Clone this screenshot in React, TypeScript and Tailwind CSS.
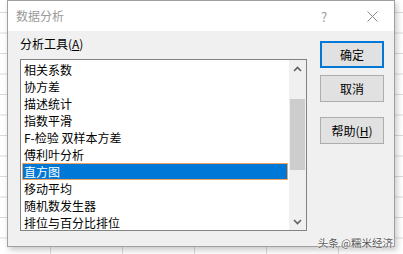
import React from "react";

const items = [
  "相关系数",
  "协方差",
  "描述统计",
  "指数平滑",
  "F-检验 双样本方差",
  "傅利叶分析",
  "直方图",
  "移动平均",
  "随机数发生器",
  "排位与百分比排位",
];

function Chevron({ up }: { up?: boolean }) {
  return (
    <svg width="9" height="6" viewBox="0 0 9 6">
      <path
        d={up ? "M1 5 L4.5 1.5 L8 5" : "M1 1 L4.5 4.5 L8 1"}
        fill="none"
        stroke="#606060"
        strokeWidth="1.6"
      />
    </svg>
  );
}

export default function App() {
  return (
    <div
      className="relative w-[403px] h-[254px] overflow-hidden bg-white bg-[linear-gradient(#dadada_1px,transparent_1px),linear-gradient(90deg,#dadada_1px,transparent_1px)] bg-size-[72px_20.5px] bg-position-[50px_12px]"
      style={{ fontFamily: '"Noto Sans CJK SC", "Noto Sans", sans-serif' }}
    >
      <div className="ml-[7px] w-[388px] h-[247px] flex flex-col border border-[#a0a0a0] bg-[#f0f0f0] shadow-[2px_3px_6px_rgba(0,0,0,0.22)]">
        {/* title bar */}
        <div className="h-[30px] bg-white flex items-center pl-[8px] shrink-0">
          <span className="text-[12px] text-[#9a9a9a] leading-none">数据分析</span>
          <span className="ml-auto text-[13px] text-[#9a9a9a] leading-none w-[10px] mr-[36px]">?</span>
          <svg width="11" height="11" viewBox="0 0 11 11" className="mr-[16px]">
            <path d="M0.5 0.5 L10.5 10.5 M10.5 0.5 L0.5 10.5" stroke="#8a8a8a" strokeWidth="1" />
          </svg>
        </div>
        {/* body */}
        <div className="flex flex-1">
          <div className="pl-[12px] pt-[4px]">
            <div className="text-[12px] leading-[17px] text-black">
              分析工具(<span className="underline">A</span>)
            </div>
            <div className="mt-[7px] w-[287px] h-[172px] border border-[#828282] bg-white flex">
              <div className="flex-1 pt-[1px] px-[1px]">
                {items.map((t, i) =>
                  i === 6 ? (
                    <div
                      key={t}
                      className="h-[17px] leading-[15px] pl-[1px] text-[12px] bg-[#0078d7] text-white border border-[#f2a35a]"
                    >
                      {t}
                    </div>
                  ) : (
                    <div key={t} className="h-[17px] leading-[17px] pl-[2px] text-[12px] text-black">
                      {t}
                    </div>
                  )
                )}
              </div>
              <div className="w-[17px] bg-[#f0f0f0] flex flex-col">
                <div className="h-[17px] flex items-center justify-center">
                  <Chevron up />
                </div>
                <div className="flex-1 relative">
                  <div className="mt-[22px] mx-[1px] h-[71px] bg-[#cdcdcd]" />
                </div>
                <div className="h-[17px] flex items-center justify-center">
                  <Chevron />
                </div>
              </div>
            </div>
          </div>
          <div className="ml-[13px] pt-[10px] flex flex-col">
            <button className="w-[64px] h-[27px] border-2 border-[#0078d7] bg-[#e1e1e1] text-[12px] text-black leading-none">
              确定
            </button>
            <button className="mt-[7px] w-[64px] h-[27px] border border-[#adadad] bg-[#e1e1e1] text-[12px] text-black leading-none">
              取消
            </button>
            <button className="mt-[15px] w-[64px] h-[27px] border border-[#adadad] bg-[#e1e1e1] text-[12px] text-black leading-none">
              帮助(<span className="underline">H</span>)
            </button>
          </div>
        </div>
      </div>
      <div className="absolute right-[10px] bottom-[6px] text-[10.5px] text-[#5a5a5a] leading-none [text-shadow:0_0_2px_#fff,0_0_2px_#fff]">
        头条 @糯米经济
      </div>
    </div>
  );
}
